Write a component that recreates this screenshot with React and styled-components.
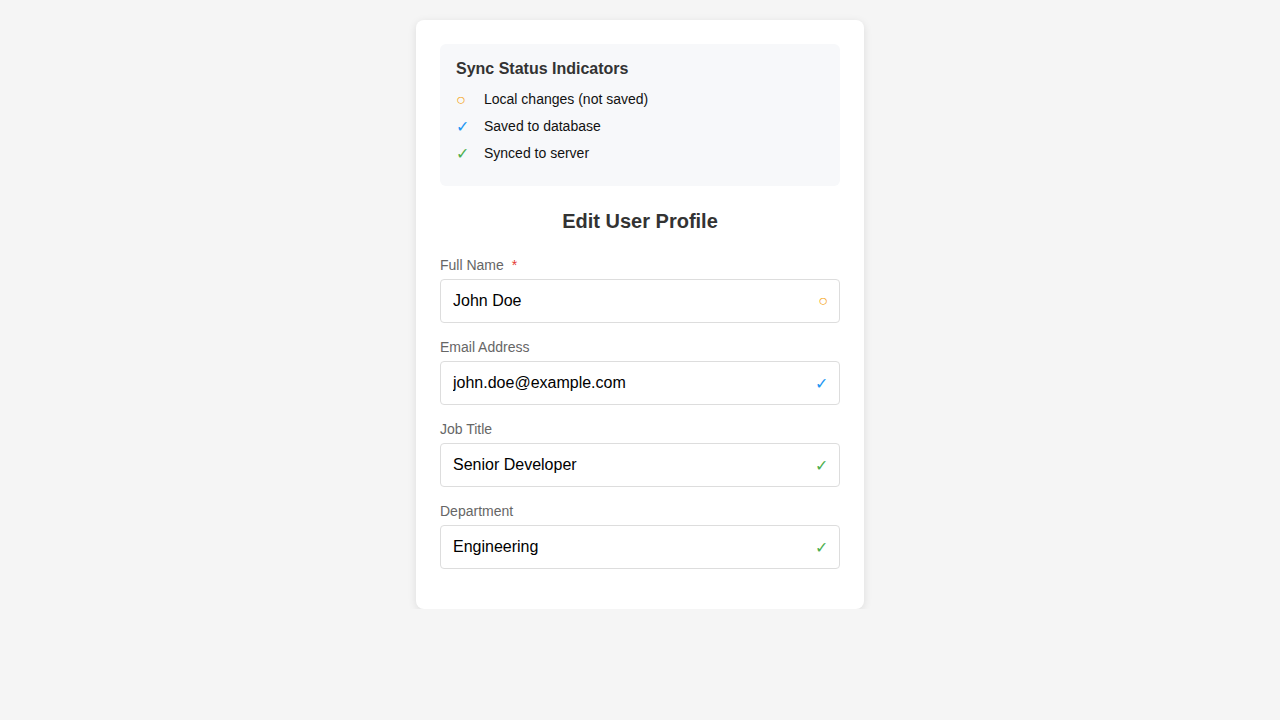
import styled, { createGlobalStyle } from "styled-components";

const fields = [
  { label: "Full Name", value: "John Doe", required: true, status: "local" },
  { label: "Email Address", value: "john.doe@example.com", status: "saved" },
  { label: "Job Title", value: "Senior Developer", status: "synced" },
  { label: "Department", value: "Engineering", status: "synced" },
];

const statusInfo = {
  local: { glyph: "○", color: "#f5a623" },
  saved: { glyph: "✓", color: "#2196f3" },
  synced: { glyph: "✓", color: "#4caf50" },
};

export default function App() {
  return (
    <>
      <GlobalStyle />
      <Page>
        <Card>
          <Legend>
            <LegendTitle>Sync Status Indicators</LegendTitle>
            <LegendItem>
              <StatusGlyph $color={statusInfo.local.color}>○</StatusGlyph>
              Local changes (not saved)
            </LegendItem>
            <LegendItem>
              <StatusGlyph $color={statusInfo.saved.color}>✓</StatusGlyph>
              Saved to database
            </LegendItem>
            <LegendItem>
              <StatusGlyph $color={statusInfo.synced.color}>✓</StatusGlyph>
              Synced to server
            </LegendItem>
          </Legend>
          <Heading>Edit User Profile</Heading>
          {fields.map((f) => (
            <Field key={f.label}>
              <Label>
                {f.label}
                {f.required && <Required>*</Required>}
              </Label>
              <InputWrap>
                <Input defaultValue={f.value} />
                <InputStatus $color={statusInfo[f.status].color}>
                  {statusInfo[f.status].glyph}
                </InputStatus>
              </InputWrap>
            </Field>
          ))}
        </Card>
      </Page>
    </>
  );
}

const GlobalStyle = createGlobalStyle`
  body {
    margin: 0;
    background: #f5f5f5;
    font-family: "Liberation Sans", Arial, sans-serif;
  }
`;

const Page = styled.div`
  display: flex;
  justify-content: center;
  padding-top: 20px;
`;

const Card = styled.div`
  width: 448px;
  box-sizing: border-box;
  background: white;
  border-radius: 8px;
  padding: 24px 24px 24px;
  box-shadow: 0 2px 8px rgba(0, 0, 0, 0.1);
`;

const Legend = styled.div`
  background: #f7f8fa;
  border-radius: 6px;
  padding: 16px 16px 23px;
`;

const LegendTitle = styled.h3`
  margin: 0 0 12px;
  font-size: 16px;
  line-height: 18px;
  font-weight: bold;
  color: #333;
`;

const LegendItem = styled.div`
  display: flex;
  align-items: center;
  font-size: 14px;
  line-height: 19px;
  color: #111;
  margin-bottom: 8px;
  &:last-child {
    margin-bottom: 0;
  }
`;

const StatusGlyph = styled.span`
  width: 28px;
  color: ${({ $color }) => $color};
  font-size: 16px;
`;

const Heading = styled.h2`
  margin: 24px 0;
  text-align: center;
  font-size: 20px;
  line-height: 23px;
  font-weight: bold;
  color: #333;
`;

const Field = styled.div`
  margin-bottom: 16px;
`;

const Label = styled.label`
  display: block;
  font-size: 14px;
  line-height: 16px;
  color: #666;
  margin-bottom: 6px;
`;

const Required = styled.span`
  color: #e53935;
  margin-left: 8px;
`;

const InputWrap = styled.div`
  position: relative;
`;

const Input = styled.input`
  width: 100%;
  box-sizing: border-box;
  height: 44px;
  padding: 0 36px 0 12px;
  border: 1px solid #ddd;
  border-radius: 4px;
  font-family: "Liberation Sans", Arial, sans-serif;
  font-size: 16px;
  color: #000;
  outline: none;
`;

const InputStatus = styled.span`
  position: absolute;
  right: 12px;
  top: 50%;
  transform: translateY(-50%);
  color: ${({ $color }) => $color};
  font-size: 16px;
`;
